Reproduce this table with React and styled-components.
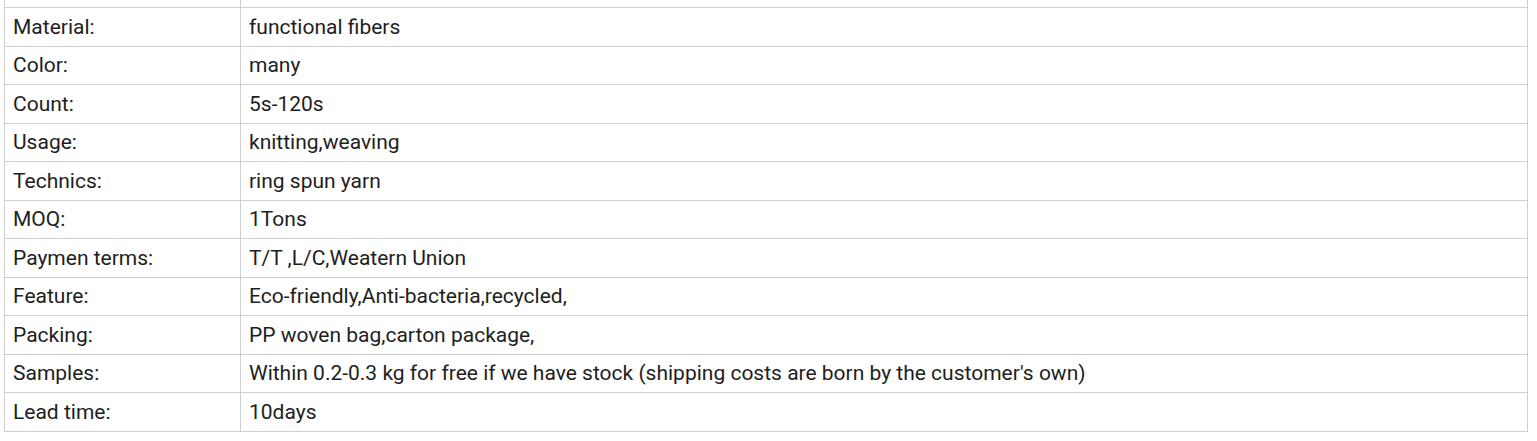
import React from 'react';
import styled, { createGlobalStyle } from 'styled-components';

const GlobalStyle = createGlobalStyle`
  body {
    margin: 0;
    background: #fff;
    font-family: Roboto, "Liberation Sans", Arial, sans-serif;
  }
`;

const Page = styled.div`
  padding-left: 4px;
`;

const SpecTable = styled.table`
  width: 1524px;
  border-collapse: collapse;
  table-layout: fixed;
  color: #1e1e1e;
  font-size: 21px;
`;

const Row = styled.tr`
  height: ${props => props.$height}px;
`;

const Cell = styled.td`
  border: 1px solid #cfcfcf;
  padding: 0 8px;
  vertical-align: middle;
  line-height: 24px;
  white-space: nowrap;
  width: ${props => (props.$label ? '219px' : 'auto')};
  ${props => props.$top && 'border-top: none;'}
`;

const specs = [
  ['Material:', 'functional fibers'],
  ['Color:', 'many'],
  ['Count:', '5s-120s'],
  ['Usage:', 'knitting,weaving'],
  ['Technics:', 'ring spun yarn'],
  ['MOQ:', '1Tons'],
  ['Paymen terms:', 'T/T ,L/C,Weatern Union'],
  ['Feature:', 'Eco-friendly,Anti-bacteria,recycled,'],
  ['Packing:', 'PP woven bag,carton package,'],
  ['Samples:', "Within 0.2-0.3 kg for free if we have stock (shipping costs are born by the customer's own)"],
  ['Lead time:', '10days']
];

const App = () => {
  return (
    <Page>
      <GlobalStyle />
      <SpecTable>
        <tbody>
          <Row $height={7.5}>
            <Cell $label $top />
            <Cell $top />
          </Row>
          {specs.map(([label, value]) => (
            <Row key={label} $height={38.5}>
              <Cell $label>{label}</Cell>
              <Cell>{value}</Cell>
            </Row>
          ))}
        </tbody>
      </SpecTable>
    </Page>
  );
};

export default App;
